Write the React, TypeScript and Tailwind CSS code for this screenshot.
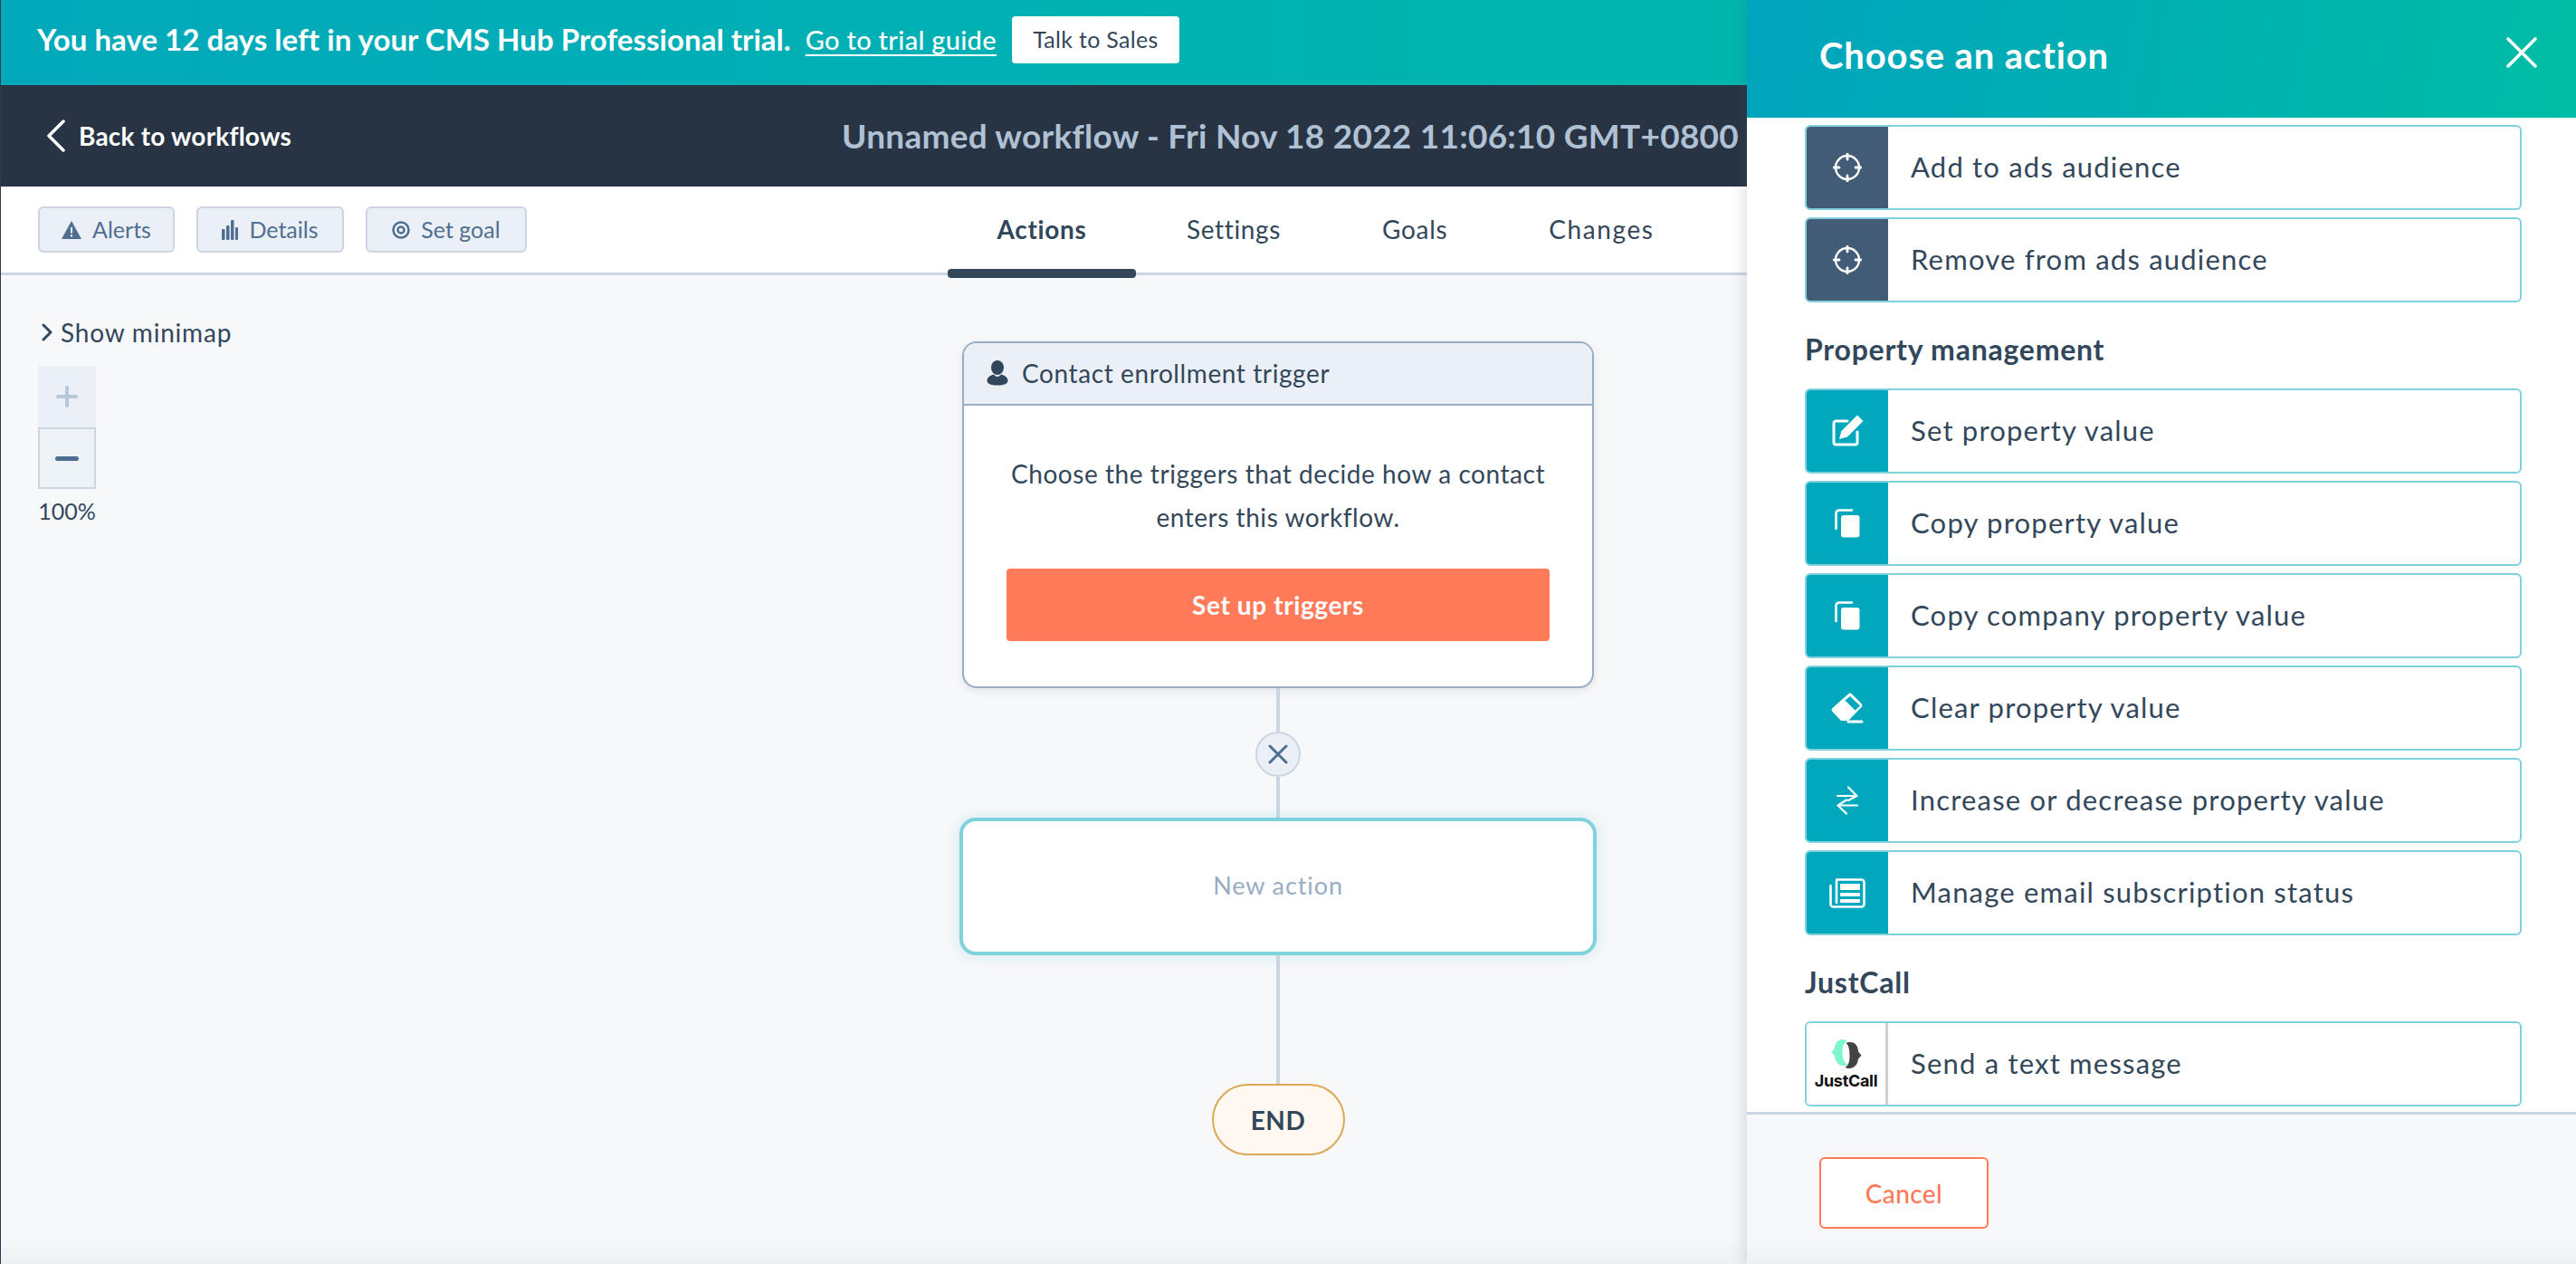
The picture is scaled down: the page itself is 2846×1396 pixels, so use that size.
import React from "react";

const FONT = "font-['Lato','Noto_Sans',sans-serif]";

const TargetIcon = () => (
  <svg width="32" height="32" viewBox="0 0 32 32" fill="none" stroke="#fff">
    <circle cx="16" cy="16" r="13" strokeWidth="2.4" />
    <path d="M16 1v6M16 25v6M1 16h6M25 16h6" strokeWidth="2.8" strokeLinecap="round" />
  </svg>
);

const EditIcon = () => (
  <svg width="36" height="36" viewBox="0 0 36 36" fill="none">
    <path
      d="M18 7H5.5A2.5 2.5 0 0 0 3 9.5v21A2.5 2.5 0 0 0 5.5 33h21a2.5 2.5 0 0 0 2.5-2.5V19"
      stroke="#fff"
      strokeWidth="3"
      strokeLinecap="round"
    />
    <path d="M29 0.5 35.5 7 18 24.5l-9 2.5 2.5-9Z" fill="#fff" />
  </svg>
);

const CopyIcon = () => (
  <svg width="28" height="32" viewBox="0 0 28 32" fill="none">
    <path d="M19 1.5H5A3.5 3.5 0 0 0 1.500 5v17" stroke="#fff" strokeWidth="2.6" strokeLinecap="round" />
    <rect x="7" y="7" width="20.500" height="24.500" rx="3" fill="#fff" />
  </svg>
);

const EraserIcon = () => (
  <svg width="36" height="34" viewBox="0 0 36 34" fill="none">
    <path d="M19 1.500a3 3 0 0 1 4 0l10.500 10.500a3 3 0 0 1 0 4L19 31H11L1.500 21a3 3 0 0 1 0-4Z" fill="#fff" />
    <path d="M16.500 7 27.500 18 33 13 22 2.500Z" fill="#00a7bd" transform="translate(-1 1.500)" />
    <path d="M19 32h15" stroke="#fff" strokeWidth="3" strokeLinecap="round" />
  </svg>
);

const SwapIcon = () => (
  <svg width="24" height="32" viewBox="0 0 24 32" fill="none" stroke="#fff" strokeWidth="2.200" strokeLinecap="round" strokeLinejoin="round">
    <path d="M1 11h21M13 1.500l9.500 9.500-9.500 5" />
    <path d="M23 21.500H2M11 15.500l-9.500 6L11 30.500" />
  </svg>
);

const NewsIcon = () => (
  <svg width="40" height="34" viewBox="0 0 40 34" fill="none">
    <path
      d="M8 2.500h27.500A3 3 0 0 1 38.500 5.500v24a3 3 0 0 1-3 3H4.500a3 3 0 0 1-3-3V9"
      stroke="#fff"
      strokeWidth="2.600"
      strokeLinecap="round"
    />
    <path d="M8 3v26" stroke="#fff" strokeWidth="2.600" />
    <rect x="12" y="7" width="22" height="7" rx="1" fill="#fff" />
    <rect x="12" y="17" width="22" height="4" rx="1" fill="#fff" />
    <rect x="12" y="24" width="22" height="4" rx="1" fill="#fff" />
  </svg>
);

const JustCallLogo = () => (
  <div className="flex flex-col items-center">
    <svg width="34" height="34" viewBox="0 0 34 34">
      <path d="M13 1c-6 0-9 5-9 10l-3.500 4 3.500 4c0 6 4 11 10 11 2 0 3.500-.500 4.500-1.500-4-1-6-6-6-12.500S14 4 18 3c-1-1.300-3-2-5-2Z" fill="#7ff5d0" />
      <path d="M21 4c6 0 9 5 9 10.500l3.500 4-3.500 4c-.500 6-4.500 10.500-10 10.500-2 0-3.500-.500-4.500-1.500 3.500-1 5-6 5-12.500S19.500 7 16.500 5c1-.700 2.700-1 4.500-1Z" fill="#444444" />
    </svg>
    <span className="mt-[4px] text-[18px] leading-[18px] font-bold text-[#111] font-['Inter',sans-serif] tracking-[-0.3px]">
      JustCall
    </span>
  </div>
);

const PersonIcon = () => (
  <svg width="24" height="28" viewBox="0 0 24 28" fill="#33475b">
    <ellipse cx="12" cy="8" rx="7" ry="8" />
    <path d="M8 15.500c-4 1-7.500 3.500-7.500 7 0 3 4 5 11.500 5s11.500-2 11.500-5c0-3.500-3.500-6-7.500-7-1 1.500-2.500 2.500-4 2.500s-3-1-4-2.500Z" />
  </svg>
);

// ---- bits of the page ----

function ToolButton({ label, icon, className }: { label: string; icon: React.ReactNode; className: string }) {
  return (
    <button
      className={`flex h-[51px] items-center justify-center gap-[12px] rounded-[6px] border-2 border-[#cbd6e2] bg-[#eaf0f6] text-[25px] leading-none text-[#506e91] ${className}`}
    >
      {icon}
      <span>{label}</span>
    </button>
  );
}

function ActionRow({ label, icon, color }: { label: string; icon: React.ReactNode; color?: string }) {
  return (
    <div className="flex h-[94px] w-[792px] overflow-hidden rounded-[6px] border-2 border-[#7fd1de] bg-white">
      <div
        className={`flex w-[90px] shrink-0 items-center justify-center ${
          color === "slate" ? "bg-[#425b76]" : color === "logo" ? "border-r-[3px] border-[#cfcfcf] bg-white" : "bg-[#00a7bd]"
        }`}
      >
        {icon}
      </div>
      <div className="flex items-center pl-[25px] pb-[1px] text-[31px] tracking-[1.2px] text-[#33475b]">{label}</div>
    </div>
  );
}

function SectionTitle({ children }: { children: React.ReactNode }) {
  return (
    <div className="flex h-[95px] items-center pt-[8px] text-[32px] font-bold tracking-[0.75px] text-[#33475b]">
      {children}
    </div>
  );
}

function Connector({ height }: { height: string }) {
  return <div className={`w-[4px] shrink-0 bg-[#cbd6e2] ${height}`} />;
}

function Canvas() {
  return (
    <div className="flex min-h-0 flex-1 bg-[linear-gradient(to_bottom,#f7f8fa_calc(100%-30px),#eff0f3)]">
      {/* minimap + zoom */}
      <div className="w-[1059px] shrink-0 pl-[41px] pt-[48px]">
        <div className="flex h-[30px] items-center gap-[9px] pl-[4px] text-[28px] tracking-[0.8px] text-[#33475b]">
          <svg width="12" height="20" viewBox="0 0 12 20" fill="none" stroke="#33475b" strokeWidth="3" strokeLinecap="round" strokeLinejoin="round">
            <path d="M2 2l8 8-8 8" />
          </svg>
          Show minimap
        </div>
        <div className="mt-[22px] flex h-[68px] w-[64px] items-center justify-center bg-[#eaf0f6]">
          <svg width="24" height="24" viewBox="0 0 24 24" stroke="#b6c7d8" strokeWidth="4" strokeLinecap="round">
            <path d="M12 2v20M2 12h20" />
          </svg>
        </div>
        <div className="flex h-[68px] w-[64px] items-center justify-center border-2 border-[#cbd6e2] bg-[#eef3f7]">
          <div className="h-[5px] w-[26px] rounded-full bg-[#506e91]" />
        </div>
        <div className="mt-[9px] w-[64px] text-center text-[25px] leading-[30px] text-[#33475b]">100%</div>
      </div>

      {/* workflow diagram */}
      <div className="flex w-[704px] shrink-0 flex-col items-center pt-[73px]">
        <div className="w-[698px] shrink-0 overflow-hidden rounded-[16px] border-2 border-[#99acc2] bg-white shadow-[0_3px_10px_rgba(66,91,118,0.12)]">
          <div className="flex h-[69px] items-center gap-[15px] border-b-2 border-[#99acc2] bg-[#eaf0f6] pb-[2px] pl-[25px] text-[28px] tracking-[0.6px] text-[#33475b]">
            <PersonIcon />
            Contact enrollment trigger
          </div>
          <div className="flex flex-col items-center px-[48px] pt-[51px]">
            <p className="text-center text-[28px] leading-[48px] tracking-[0.55px] text-[#33475b]">
              Choose the triggers that decide how a contact
              <br />
              enters this workflow.
            </p>
            <button className="mt-[33px] h-[80px] w-[600px] rounded-[4px] bg-[#ff7a59] text-[28px] font-bold tracking-[0.6px] text-white">
              Set up triggers
            </button>
          </div>
          <div className="h-[50px]" />
        </div>
        <Connector height="h-[48px]" />
        <div className="flex h-[50px] w-[50px] shrink-0 items-center justify-center rounded-full border-2 border-[#cbd6e2] bg-[#eaf0f6]">
          <svg width="22" height="22" viewBox="0 0 22 22" stroke="#506e91" strokeWidth="3" strokeLinecap="round">
            <path d="M2 2l18 18M20 2L2 20" />
          </svg>
        </div>
        <Connector height="h-[45px]" />
        <div className="flex h-[152px] w-[704px] shrink-0 items-center justify-center rounded-[18px] border-4 border-[#7fd1de] bg-white pb-[1px] text-[27px] tracking-[0.9px] text-[#99acc2] shadow-[0_0_16px_rgba(127,209,222,0.35)]">
          New action
        </div>
        <Connector height="h-[142px]" />
        <div className="flex h-[79px] w-[147px] shrink-0 items-center justify-center rounded-[40px] border-2 border-[#dba858] bg-[#fef8f0] text-[28px] font-bold tracking-[0.5px] text-[#33475b]">
          END
        </div>
      </div>
    </div>
  );
}

function MainColumn() {
  return (
    <div className="flex h-full w-[1930px] shrink-0 flex-col overflow-hidden border-l border-[#2a3b57]">
      {/* trial banner */}
      <div className="flex h-[94px] shrink-0 items-center bg-[linear-gradient(to_right,#02a9bb,#00b6ad)] pb-[6px] pl-[40px] text-white">
        <span className="text-[33px] font-bold tracking-[0.04px]">You have 12 days left in your CMS Hub Professional trial.</span>
        <a className="ml-[16px] text-[29px] font-medium tracking-[0.3px] underline underline-offset-[5px] decoration-2">Go to trial guide</a>
        <button className="ml-[17px] flex h-[52px] w-[185px] items-center justify-center rounded-[4px] bg-white text-[25px] tracking-[0.3px] text-[#33475b]">
          Talk to Sales
        </button>
      </div>

      {/* nav */}
      <div className="flex h-[112px] shrink-0 items-center justify-between bg-[#283444] pl-[50px] pr-[9px]">
        <div className="flex items-center gap-[15px] text-[28px] font-bold tracking-[0.2px] text-white">
          <svg width="21" height="36" viewBox="0 0 21 36" fill="none" stroke="#fff" strokeWidth="3.500" strokeLinecap="round" strokeLinejoin="round">
            <path d="M19 2 3 18l16 16" />
          </svg>
          Back to workflows
        </div>
        <div className="text-[37px] font-bold tracking-[0.24px] text-[#b0c1d4] whitespace-nowrap">
          Unnamed workflow - Fri Nov 18 2022 11:06:10 GMT+0800
        </div>
      </div>

      {/* toolbar + tabs */}
      <div className="relative flex h-[98px] shrink-0 items-start border-b-[3px] border-[#cbd6e2] bg-white pl-[41px]">
        <div className="flex gap-[24px] pt-[22px]">
          <ToolButton
            label="Alerts"
            className="w-[151px]"
            icon={
              <svg width="22" height="20" viewBox="0 0 22 20">
                <path fillRule="evenodd" fill="#506e91" d="M11 0 22 20H0ZM10 7v6.500h2V7ZM10 15v2.500h2V15Z" />
              </svg>
            }
          />
          <ToolButton
            label="Details"
            className="w-[163px]"
            icon={
              <svg width="18" height="22" viewBox="0 0 18 22" fill="#506e91">
                <rect x="0" y="10" width="3.500" height="12" rx="1" />
                <rect x="5" y="6" width="3.500" height="16" rx="1" />
                <rect x="10" y="0" width="3.500" height="22" rx="1" />
                <rect x="15" y="8" width="3" height="14" rx="1" />
              </svg>
            }
          />
          <ToolButton
            label="Set goal"
            className="w-[178px]"
            icon={
              <svg width="20" height="20" viewBox="0 0 20 20" fill="none" stroke="#506e91">
                <circle cx="10" cy="10" r="8.500" strokeWidth="2.500" />
                <circle cx="10" cy="10" r="3.500" strokeWidth="2.500" />
              </svg>
            }
          />
        </div>
        <div className="ml-[465px] flex h-full text-[28px] tracking-[0.65px] text-[#33475b]">
          <div className="relative flex w-[208px] items-center justify-center pb-[2px] font-bold">
            Actions
            <div className="absolute bottom-[-6px] left-0 h-[10px] w-full rounded-[4px] bg-[#33475b]" />
          </div>
          <div className="ml-[56px] flex items-center pb-[2px]">Settings</div>
          <div className="ml-[112px] flex items-center pb-[2px]">Goals</div>
          <div className="ml-[112px] flex items-center pb-[2px] tracking-[1.6px]">Changes</div>
        </div>
      </div>

      <Canvas />
    </div>
  );
}

function ActionPanel() {
  return (
    <div className="relative z-10 flex h-full w-[916px] shrink-0 flex-col bg-white shadow-[-6px_0_12px_rgba(66,91,118,0.14)]">
      <div className="flex h-[130px] shrink-0 items-center justify-between bg-[linear-gradient(100deg,#00a4bd,#00bda5)] pb-[8px] pl-[80px] pr-[43px] text-white">
        <span className="text-[40px] font-bold tracking-[0.85px]">Choose an action</span>
        <svg className="mb-[6px]" width="34" height="34" viewBox="0 0 34 34" stroke="#fff" strokeWidth="3.500" strokeLinecap="round">
          <path d="M2 2l30 30M32 2L2 32" />
        </svg>
      </div>

      <div className="min-h-0 flex-1 overflow-hidden pl-[64px] pt-[8px]">
        <div className="flex flex-col gap-[8px]">
          <ActionRow label="Add to ads audience" icon={<TargetIcon />} color="slate" />
          <ActionRow label="Remove from ads audience" icon={<TargetIcon />} color="slate" />
        </div>
        <SectionTitle>Property management</SectionTitle>
        <div className="flex flex-col gap-[8px]">
          <ActionRow label="Set property value" icon={<EditIcon />} />
          <ActionRow label="Copy property value" icon={<CopyIcon />} />
          <ActionRow label="Copy company property value" icon={<CopyIcon />} />
          <ActionRow label="Clear property value" icon={<EraserIcon />} />
          <ActionRow label="Increase or decrease property value" icon={<SwapIcon />} />
          <ActionRow label="Manage email subscription status" icon={<NewsIcon />} />
        </div>
        <SectionTitle>JustCall</SectionTitle>
        <ActionRow label="Send a text message" icon={<JustCallLogo />} color="logo" />
      </div>

      <div className="h-[168px] shrink-0 border-t-[3px] border-[#cbd6e2] bg-[linear-gradient(to_bottom,#f7f8fa_calc(100%-30px),#eff0f3)] pl-[80px] pt-[47px]">
        <button className="h-[79px] w-[187px] rounded-[6px] border-2 border-[#ff7a59] bg-white text-[28px] font-medium tracking-[0.4px] text-[#ff7a59]">
          Cancel
        </button>
      </div>
    </div>
  );
}

export default function App() {
  return (
    <div className={`flex h-screen w-full overflow-hidden bg-white ${FONT}`}>
      <MainColumn />
      <ActionPanel />
    </div>
  );
}
